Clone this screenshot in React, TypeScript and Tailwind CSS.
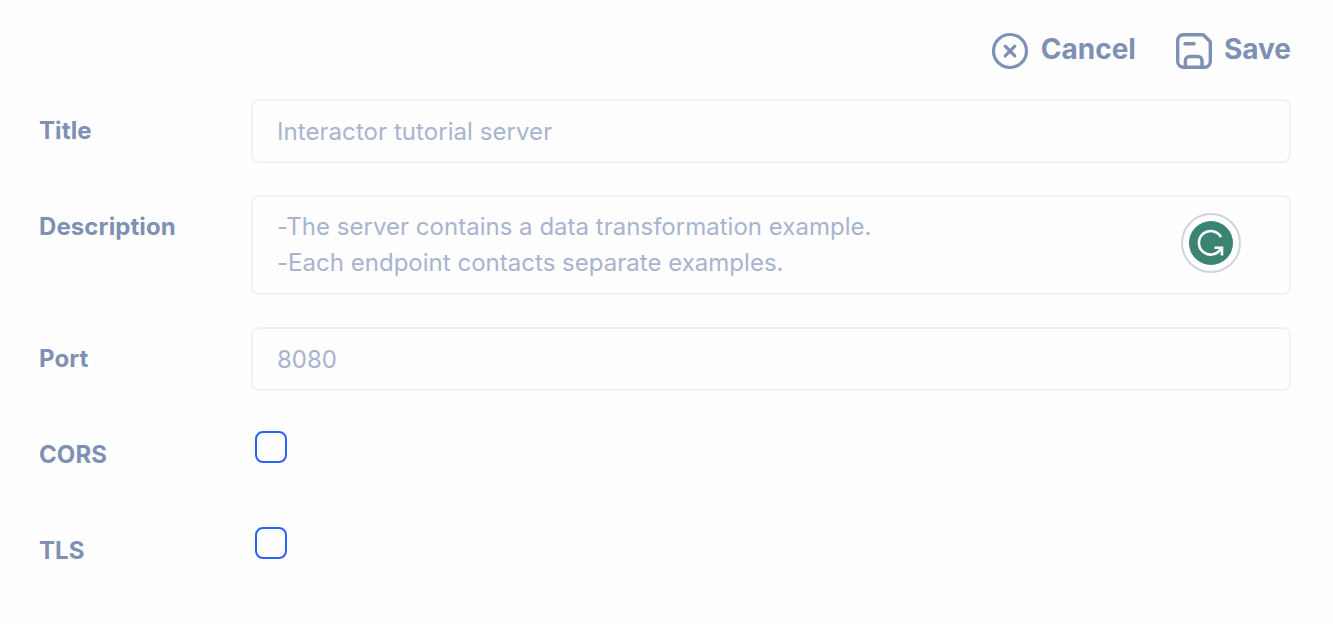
import React from "react";

function CancelIcon() {
  return (
    <svg width="38" height="38" viewBox="0 0 38 38" fill="none" stroke="#7f90b5" strokeWidth="3.2" strokeLinecap="round" className="block">
      <circle cx="19" cy="19" r="16.5" />
      <path d="M14.200 14.200l9.600 9.600M23.800 14.200l-9.600 9.600" />
    </svg>
  );
}

function SaveIcon() {
  return (
    <svg width="38" height="38" viewBox="0 0 38 38" fill="none" stroke="#7f90b5" strokeWidth="3.4" strokeLinecap="round" strokeLinejoin="round" className="block">
      <path d="M8.500 2.700H28.200L35.300 9.800V29.500A5.800 5.800 0 0 1 29.500 35.300H8.500A5.800 5.800 0 0 1 2.700 29.500V8.500A5.800 5.800 0 0 1 8.500 2.700Z" />
      <path d="M10.400 35V28.500A4 4 0 0 1 14.400 24.500H23A4 4 0 0 1 27 28.500V35M10 11.800H19" />
    </svg>
  );
}

function Badge() {
  return (
    <svg width="60" height="60" viewBox="0 0 60 60" fill="none" className="absolute right-[48px] top-[16px]">
      <circle cx="30" cy="30" r="29" fill="#fff" stroke="#d0d2dd" strokeWidth="2" />
      <circle cx="30" cy="30" r="22" fill="#3b8373" />
      <path d="M40 24A11.800 11.800 0 1 0 40.200 35.200M33.500 34.800H41V42.500" stroke="#fff" strokeWidth="2.6" />
    </svg>
  );
}

function Label({ children }: { children: React.ReactNode }) {
  return <div className="w-[212px] shrink-0 pt-[14px] text-[24px] leading-9 font-bold tracking-[0.1px] text-[#7f90b5]">{children}</div>;
}

function Checkbox() {
  return <div className="ml-1 mt-2 size-8 rounded-lg border-2 border-[#2962f5]" />;
}

const box = "flex-1 rounded-lg border-2 border-[#f1f1f5] px-6 text-[24px] leading-9 font-normal text-[#a8b4cf] ";

export default function App() {
  return (
    <main className="h-[624px] w-[1333px] bg-[#fefefe] pl-[39px] pr-[42px] pt-8 font-['Inter',sans-serif]">
      <header className="flex h-[38px] items-center justify-end text-[28px] font-bold text-[#7f90b5]">
        <button className="flex items-center gap-3"><CancelIcon /><span className="-mt-1">Cancel</span></button>
        <button className="ml-[39px] flex items-center gap-[11px]"><SaveIcon /><span className="-mt-1">Save</span></button>
      </header>
      <div className="mt-[29px] flex h-16"><Label>Title</Label><div className={box + "pt-[13px] tracking-[0.06px]"}>Interactor tutorial server</div></div>
      <div className="mt-8 flex h-[100px]"><Label>Description</Label><div className={box + "relative pt-3 tracking-[0.02px]"}>-The server contains a data transformation example.<br />-Each endpoint contacts separate examples.<Badge /></div></div>
      <div className="mt-8 flex h-16"><Label>Port</Label><div className={box + "pt-[13px]"}>8080</div></div>
      <div className="mt-8 flex h-16"><Label>CORS</Label><Checkbox /></div>
      <div className="mt-8 flex h-16"><Label>TLS</Label><Checkbox /></div>
    </main>
  );
}
